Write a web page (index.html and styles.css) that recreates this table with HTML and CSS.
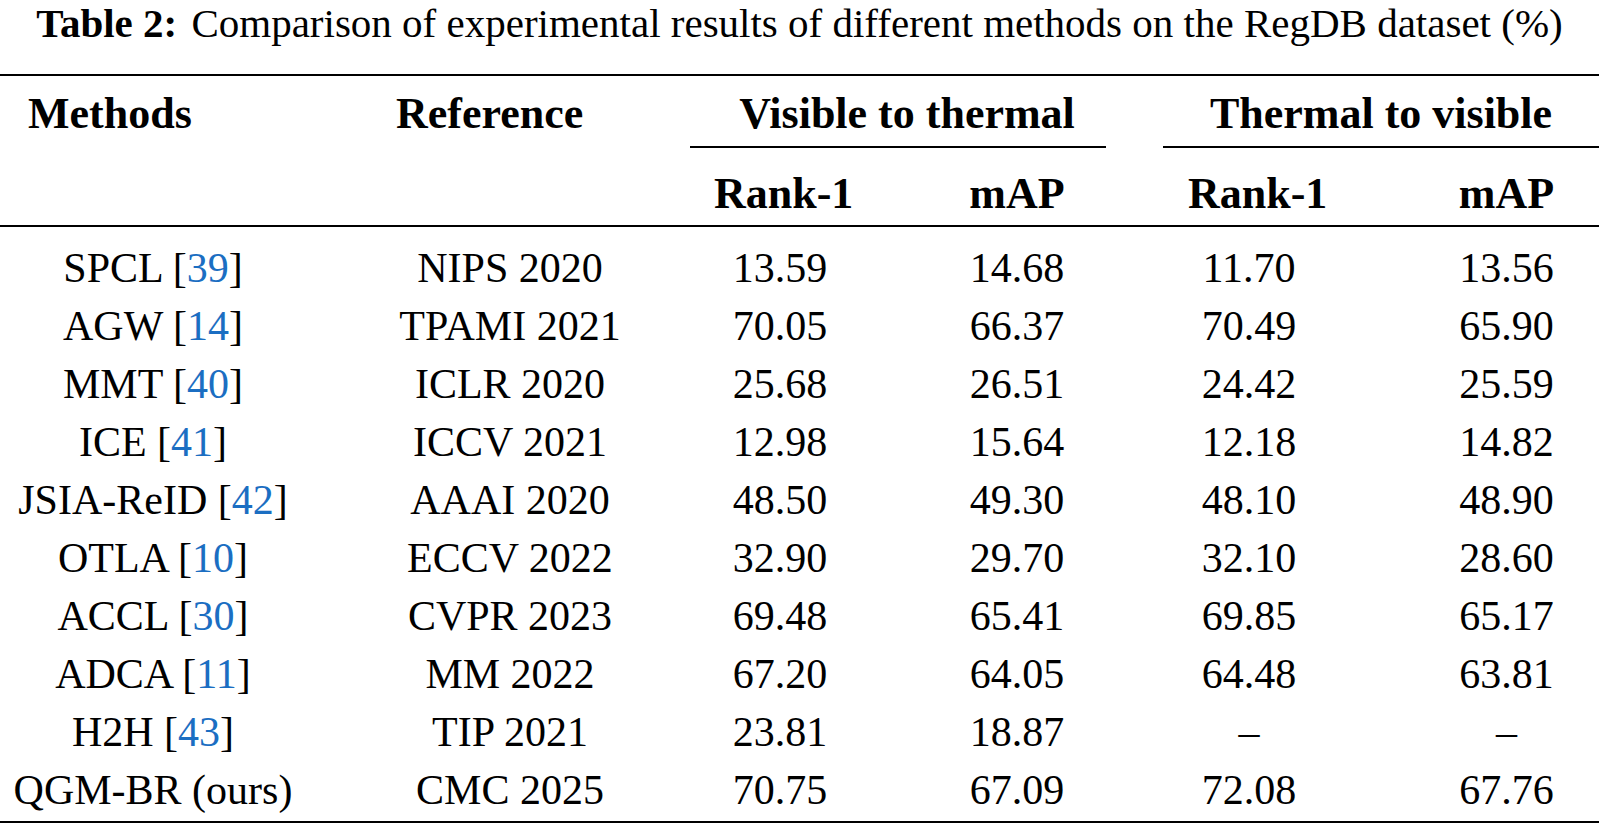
FILE: index.html
```html
<!DOCTYPE html>
<html lang="en">
<head>
<meta charset="utf-8">
<title>Table 2</title>
<link rel="stylesheet" href="styles.css">
</head>
<body>
<div class="caption"><span class="cap-label">Table 2:</span> Comparison of experimental results of different methods on the RegDB dataset (%)</div>
<div class="table">
  <div class="thead">
    <div class="row head-row1">
      <div class="hcell h-methods">Methods</div>
      <div class="hcell h-ref">Reference</div>
      <div class="hcell h-group h-vt">Visible to thermal</div>
      <div class="hcell h-group h-tv">Thermal to visible</div>
    </div>
    <div class="row head-row2">
      <div class="hcell c3">Rank-1</div>
      <div class="hcell c4">mAP</div>
      <div class="hcell c5">Rank-1</div>
      <div class="hcell c6">mAP</div>
    </div>
  </div>
  <div class="tbody">
    <div class="row body-row"><div class="cell">SPCL [<span class="cite">39</span>]</div><div class="cell">NIPS 2020</div><div class="cell">13.59</div><div class="cell">14.68</div><div class="cell">11.70</div><div class="cell c6">13.56</div></div>
    <div class="row body-row"><div class="cell">AGW [<span class="cite">14</span>]</div><div class="cell">TPAMI 2021</div><div class="cell">70.05</div><div class="cell">66.37</div><div class="cell">70.49</div><div class="cell c6">65.90</div></div>
    <div class="row body-row"><div class="cell">MMT [<span class="cite">40</span>]</div><div class="cell">ICLR 2020</div><div class="cell">25.68</div><div class="cell">26.51</div><div class="cell">24.42</div><div class="cell c6">25.59</div></div>
    <div class="row body-row"><div class="cell">ICE [<span class="cite">41</span>]</div><div class="cell">ICCV 2021</div><div class="cell">12.98</div><div class="cell">15.64</div><div class="cell">12.18</div><div class="cell c6">14.82</div></div>
    <div class="row body-row"><div class="cell">JSIA-ReID [<span class="cite">42</span>]</div><div class="cell">AAAI 2020</div><div class="cell">48.50</div><div class="cell">49.30</div><div class="cell">48.10</div><div class="cell c6">48.90</div></div>
    <div class="row body-row"><div class="cell">OTLA [<span class="cite">10</span>]</div><div class="cell">ECCV 2022</div><div class="cell">32.90</div><div class="cell">29.70</div><div class="cell">32.10</div><div class="cell c6">28.60</div></div>
    <div class="row body-row"><div class="cell">ACCL [<span class="cite">30</span>]</div><div class="cell">CVPR 2023</div><div class="cell">69.48</div><div class="cell">65.41</div><div class="cell">69.85</div><div class="cell c6">65.17</div></div>
    <div class="row body-row"><div class="cell">ADCA [<span class="cite">11</span>]</div><div class="cell">MM 2022</div><div class="cell">67.20</div><div class="cell">64.05</div><div class="cell">64.48</div><div class="cell c6">63.81</div></div>
    <div class="row body-row"><div class="cell">H2H [<span class="cite">43</span>]</div><div class="cell">TIP 2021</div><div class="cell">23.81</div><div class="cell">18.87</div><div class="cell">–</div><div class="cell c6">–</div></div>
    <div class="row body-row"><div class="cell">QGM-BR (ours)</div><div class="cell">CMC 2025</div><div class="cell">70.75</div><div class="cell">67.09</div><div class="cell">72.08</div><div class="cell c6">67.76</div></div>
  </div>
</div>
</body>
</html>
```

FILE: styles.css
```css
html, body {
  margin: 0;
  padding: 0;
  background: #ffffff;
}

body {
  width: 1599px;
  color: #000000;
  font-family: "Liberation Serif", "Times New Roman", serif;
}

.caption {
  height: 46px;
  line-height: 46px;
  font-size: 41px;
  text-align: center;
  white-space: nowrap;
}

.cap-label {
  font-weight: bold;
  margin-right: 4px;
}

.table {
  margin-top: 28px;
  border-top: 2px solid #000000;
  border-bottom: 2px solid #000000;
}

.thead {
  border-bottom: 2px solid #000000;
}

.row {
  display: grid;
  grid-template-columns: 306px 408px 132px 342px 122px 289px;
}

.hcell {
  font-weight: bold;
  font-size: 44px;
  line-height: 48px;
  white-space: nowrap;
}

.head-row1 .hcell {
  padding-top: 14px;
  padding-bottom: 8px;
}

.h-methods {
  padding-left: 28px;
  text-align: left;
}

.h-ref {
  padding-left: 90px;
  text-align: left;
}

.h-group {
  text-align: center;
  border-bottom: 2px solid #000000;
}

.h-vt {
  grid-column: 3 / 5;
  margin: 0 82px 0 -24px;
  padding-left: 18px;
}

.h-tv {
  grid-column: 5 / 7;
  margin-left: -25px;
}

.head-row2 .hcell {
  padding-top: 22px;
  padding-bottom: 7px;
  text-align: center;
}

.c3 { grid-column: 3; }
.c4 { grid-column: 4; }
.c5 { grid-column: 5; }

.c6 {
  grid-column: 6;
  padding-left: 104px;
}

.tbody {
  padding-top: 12px;
  padding-bottom: 2px;
}

.cell {
  font-size: 42px;
  line-height: 58px;
  height: 58px;
  text-align: center;
  white-space: nowrap;
}

.cite {
  color: #1b6ec2;
}
```
